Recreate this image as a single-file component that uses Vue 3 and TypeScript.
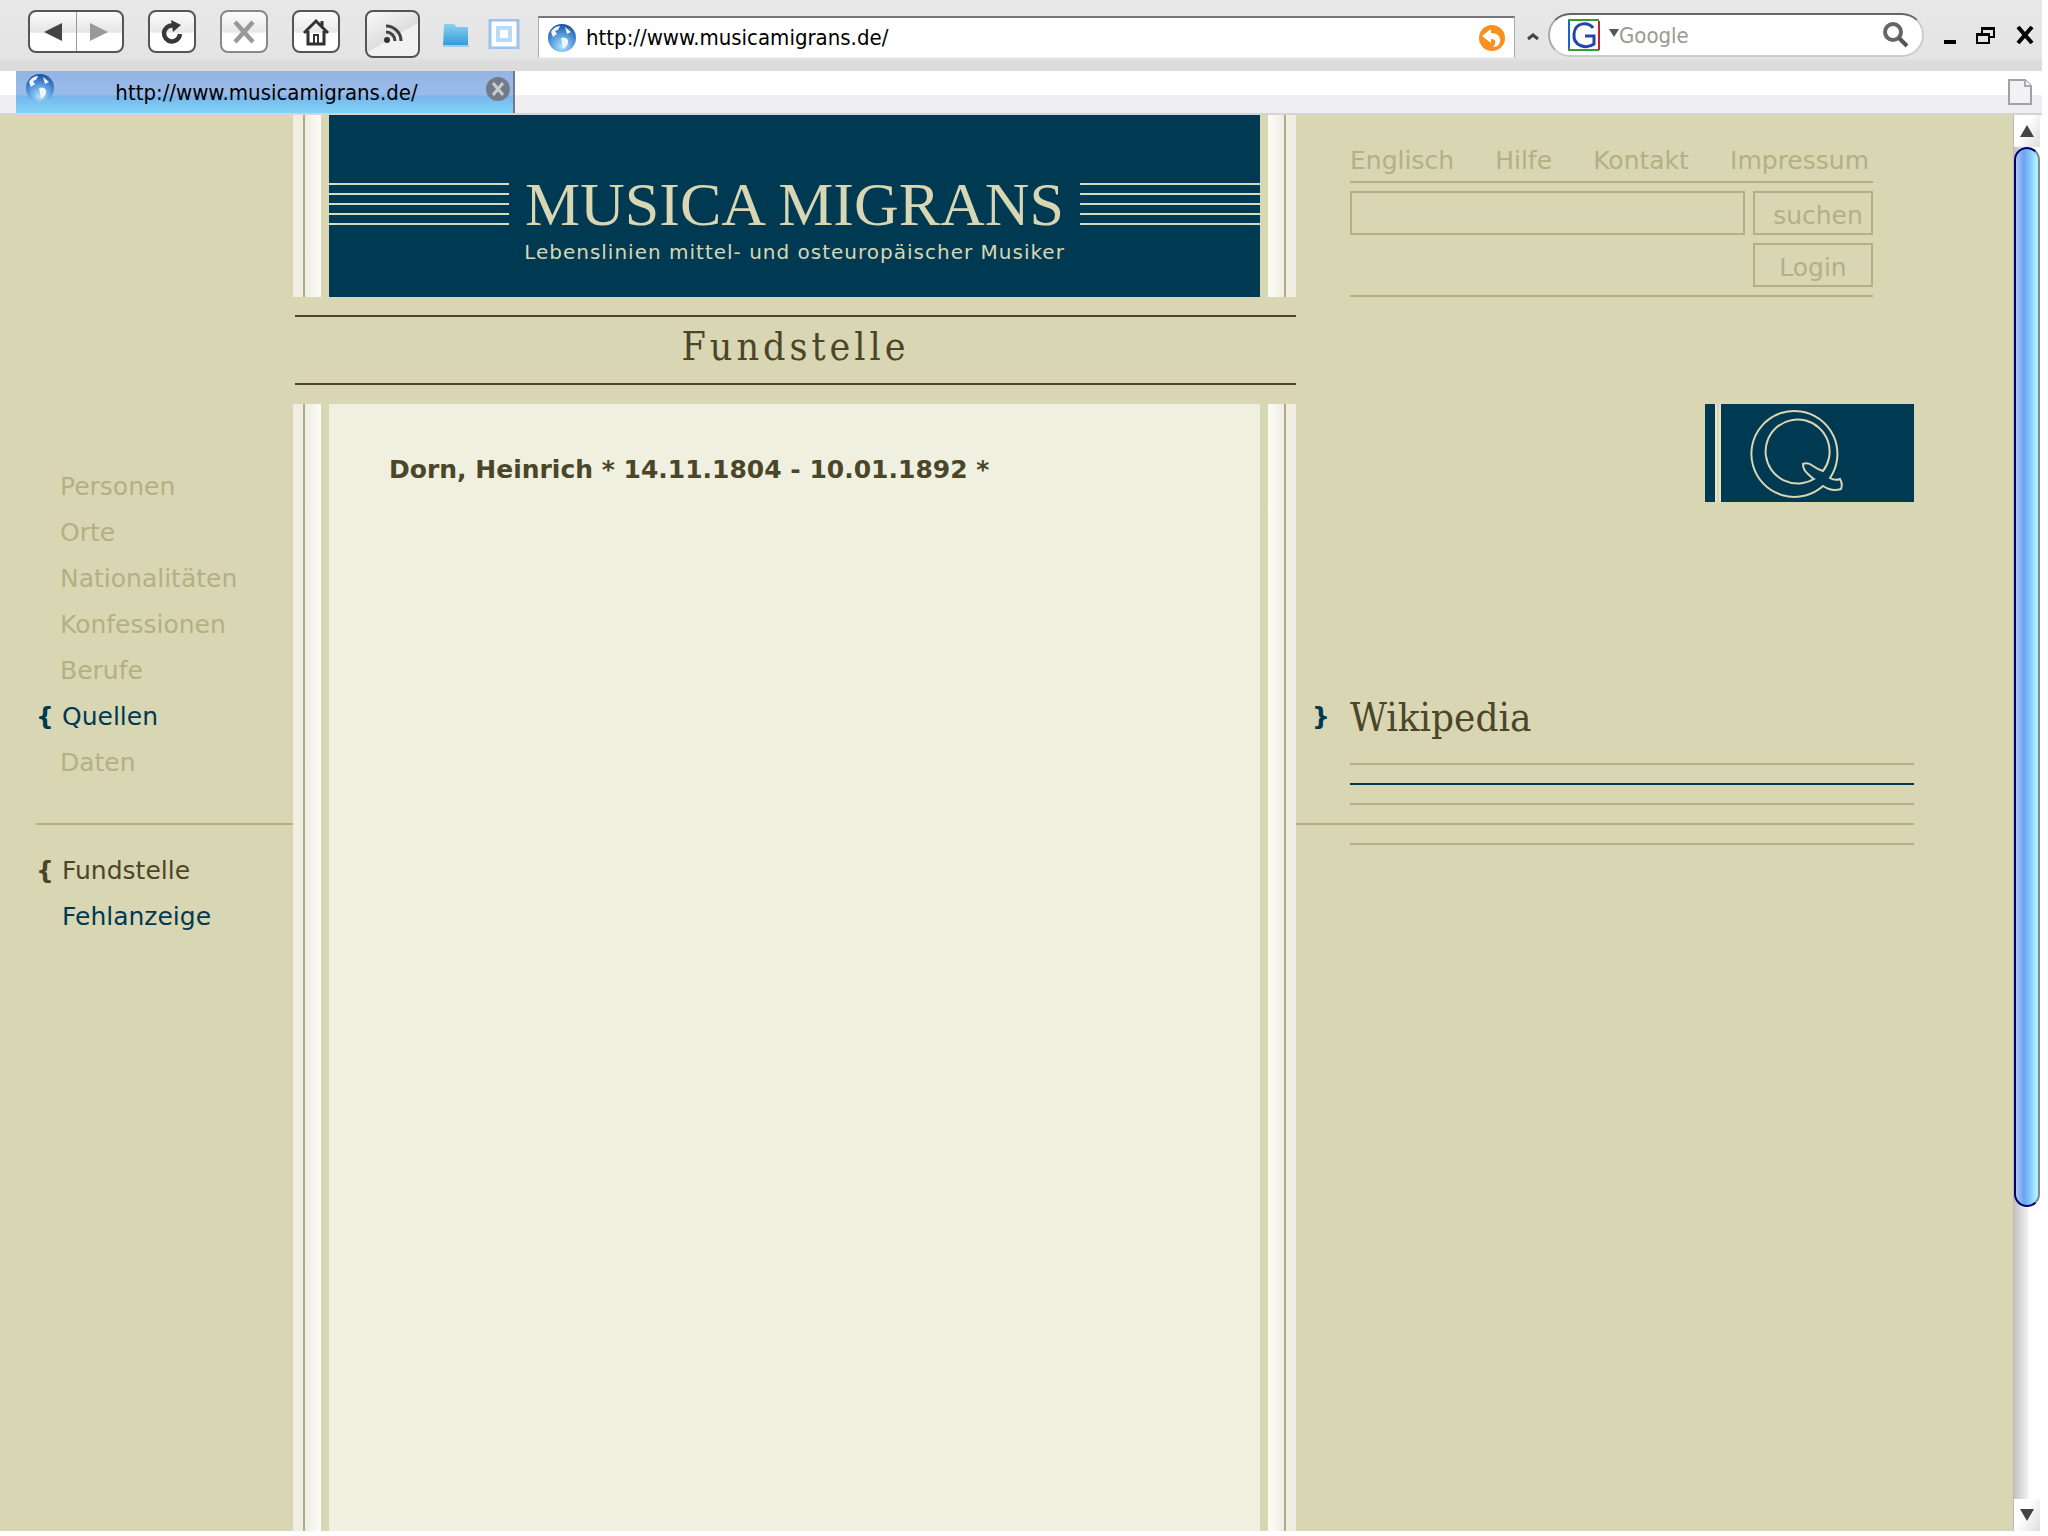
<script setup lang="ts">
interface Entry { label: string; tone: 'dim' | 'blue' | 'dark'; mark?: boolean }

const topLinks: string[] = ['Englisch', 'Hilfe', 'Kontakt', 'Impressum']
const mainNav: Entry[] = [
  { label: 'Personen', tone: 'dim' },
  { label: 'Orte', tone: 'dim' },
  { label: 'Nationalitäten', tone: 'dim' },
  { label: 'Konfessionen', tone: 'dim' },
  { label: 'Berufe', tone: 'dim' },
  { label: 'Quellen', tone: 'blue', mark: true },
  { label: 'Daten', tone: 'dim' },
]
const subNav: Entry[] = [
  { label: 'Fundstelle', tone: 'dark', mark: true },
  { label: 'Fehlanzeige', tone: 'blue' },
]
</script>

<template>
  <div class="browser">
    <header class="toolbar">
      <div class="pair">
        <button class="half" aria-label="Back"><svg width="18" height="20" viewBox="0 0 18 20"><path d="M18 1v18L0 10z" fill="#444" /></svg></button>
        <button class="half" aria-label="Forward"><svg width="18" height="18" viewBox="0 0 18 18"><path d="M0 0v18L18 9z" fill="#999" /></svg></button>
      </div>
      <button class="tool" aria-label="Reload">
        <svg width="24" height="26" viewBox="0 0 24 26"><path d="M13 6.500A8 8 0 1 0 20 15" fill="none" stroke="#383838" stroke-width="4.500" /><path d="M11 1l10 5-8 7z" fill="#383838" /></svg>
      </button>
      <button class="tool pale" aria-label="Stop">
        <svg width="24" height="24" viewBox="0 0 24 24"><path d="M3 2l18 20M21 2L3 22" stroke="#999" stroke-width="4.500" /></svg>
      </button>
      <button class="tool" aria-label="Home">
        <svg width="28" height="28" viewBox="0 0 28 28"><path d="M2 15L14 3l12 12M6 13v13h16V13M20 8V3" fill="none" stroke="#333" stroke-width="3" /><path d="M12 26v-9h4v9" fill="none" stroke="#333" stroke-width="2" /></svg>
      </button>
      <button class="tool feed" aria-label="Feeds">
        <svg width="20" height="20" viewBox="0 0 20 20"><circle cx="4" cy="16" r="3" fill="#333" /><path d="M3 8a9 9 0 0 1 9 9M3 2a15 15 0 0 1 15 15" fill="none" stroke="#444" stroke-width="3" /></svg>
      </button>
      <svg class="folder" width="28" height="26" viewBox="0 0 28 26"><defs><linearGradient id="fold" x2="0" y2="1"><stop offset="0" stop-color="#8fd0f0" /><stop offset="1" stop-color="#2b9bd6" /></linearGradient></defs><path d="M2 2h10l3 3h11v19H1z" fill="url(#fold)" /><path d="M1 24h26" stroke="#a5cbe8" stroke-width="2" /></svg>
      <svg class="square" width="32" height="30" viewBox="0 0 32 30"><rect x="2" y="1" width="28" height="28" fill="#fff" stroke="#9dc3e6" stroke-width="3" /><rect x="10" y="9" width="12" height="12" fill="#fff" stroke="#b5dcf8" stroke-width="4" /></svg>
      <div class="address">
        <svg class="globe" width="30" height="30" viewBox="0 0 30 30"><use href="#globe" /></svg>
        <input type="text" value="http://www.musicamigrans.de/" aria-label="Address" />
        <svg width="28" height="28" viewBox="0 0 28 28"><circle cx="14" cy="14" r="13" fill="#f7901e" /><path d="M4 12l9-7v4c7 0 10 4 9 9-1 4-4 5-7 5 3-3 4-8-2-8v4z" fill="#fff" /></svg>
      </div>
      <svg class="chev" width="12" height="9" viewBox="0 0 12 9"><path d="M1 7l5-4 5 4" fill="none" stroke="#444" stroke-width="3" /></svg>
      <div class="search">
        <svg width="32" height="32" viewBox="0 0 32 32"><path d="M1 31V1" stroke="#1668c8" stroke-width="2" /><path d="M0 1h31M0 31h31" stroke="#3a9a3a" stroke-width="2" /><path d="M31 2v29" stroke="#c8202c" stroke-width="2" /><path d="M25 9C22 3 7 2 6 15s13 15 20 10v-8h-9" fill="none" stroke="#2244b0" stroke-width="3" /></svg>
        <svg class="tri" width="10" height="8" viewBox="0 0 10 8"><path d="M0 0h10L5 8z" fill="#555" /></svg>
        <input type="text" placeholder="Google" aria-label="Search" />
        <svg width="28" height="28" viewBox="0 0 28 28"><circle cx="11" cy="11" r="8" fill="none" stroke="#666" stroke-width="4" /><path d="M17 17l8 8" stroke="#555" stroke-width="4" /></svg>
      </div>
      <div class="win">
        <button aria-label="Minimise"><svg width="12" height="18" viewBox="0 0 12 18"><path d="M0 16h12" stroke="#000" stroke-width="4" /></svg></button>
        <button aria-label="Restore"><svg width="20" height="18" viewBox="0 0 20 18"><path d="M6 7V2h12v9h-4M6 3h12" fill="none" stroke="#000" stroke-width="2" /><path d="M1 8h12v9H1zM1 9h12" fill="none" stroke="#000" stroke-width="2" /></svg></button>
        <button aria-label="Close"><svg width="18" height="18" viewBox="0 0 18 18"><path d="M2 1l14 16M16 1L2 17" stroke="#000" stroke-width="4" /></svg></button>
      </div>
    </header>

    <div class="tabs">
      <div class="tab">
        <svg class="globe" width="30" height="30" viewBox="0 0 30 30">
          <defs>
            <radialGradient id="sea" cx=".5" cy=".8" r=".8"><stop offset="0" stop-color="#b4e2fa" /><stop offset=".5" stop-color="#5a9fe0" /><stop offset="1" stop-color="#1c4f9e" /></radialGradient>
            <g id="globe"><circle cx="15" cy="15" r="14" fill="url(#sea)" /><path d="M4 9c2-4 6-6 9-6l-2 4-3 1 2 3-4 3zM14 15c5-1 8 1 7 5s-3 4-5 6l-1-6zM18 4l6 5-4 2z" fill="#eef7ff" /></g>
          </defs>
          <use href="#globe" />
        </svg>
        <span>http://www.musicamigrans.de/</span>
        <button aria-label="Close tab"><svg width="24" height="24" viewBox="0 0 24 24"><circle cx="12" cy="12" r="12" fill="#747b88" /><path d="M7 6l10 12M17 6L7 18" stroke="#ccc" stroke-width="3" /></svg></button>
      </div>
      <svg width="24" height="26" viewBox="0 0 24 26"><path d="M1 1h16l6 6v18H1z" fill="#f2f2f4" stroke="#a0a0a4" stroke-width="2" /><path d="M17 1v6h6" fill="#fff" stroke="#aaa" stroke-width="2" /></svg>
    </div>

    <div class="view">
      <div class="page">
        <aside class="left">
          <nav class="list">
            <a v-for="e in mainNav" :key="e.label" href="#" :class="e.tone"><b>{{ e.mark ? '{' : '' }}</b>{{ e.label }}</a>
          </nav>
          <hr />
          <nav class="list sub">
            <a v-for="e in subNav" :key="e.label" href="#" :class="e.tone"><b>{{ e.mark ? '{' : '' }}</b>{{ e.label }}</a>
          </nav>
        </aside>

        <main class="center">
          <div class="framed">
            <i class="pillar"></i>
            <div class="banner">
              <div class="brand">
                <div class="staff"><i v-for="n in 5" :key="n"></i></div>
                <h1>MUSICA MIGRANS</h1>
                <div class="staff"><i v-for="n in 5" :key="n"></i></div>
              </div>
              <p>Lebenslinien mittel- und osteuropäischer Musiker</p>
            </div>
            <i class="pillar flip"></i>
          </div>
          <h2>Fundstelle</h2>
          <div class="framed grow">
            <i class="pillar"></i>
            <article>Dorn, Heinrich * 14.11.1804 - 10.01.1892 *</article>
            <i class="pillar flip"></i>
          </div>
        </main>

        <aside class="right">
          <div class="tools">
            <nav><a v-for="l in topLinks" :key="l" href="#">{{ l }}</a></nav>
            <form @submit.prevent>
              <input type="text" aria-label="Suche" />
              <button class="find">suchen</button>
              <button class="login" type="button">Login</button>
            </form>
          </div>
          <svg class="q" width="209" height="98" viewBox="0 0 209 98">
            <path d="M0 0h10v98H0zM16 0h193v98H16z" fill="#003a52" />
            <path d="M11 0v98M15 0v98" stroke="#e8e4c8" stroke-width="2" />
            <g fill="none" stroke="#d9d6b3" stroke-width="2">
              <path d="M118 82A43 43 0 1 1 125 74Q130 77 135 75Q138 80 136 85Q127 88 118 82z" />
              <path d="M109 75A32 32 0 1 1 118 67Q112 65 108 62Q103 58 98 60Q98 66 103 70Q106 73 109 75z" />
            </g>
          </svg>
          <div class="wiki"><b>}</b><a href="#">Wikipedia</a></div>
          <div class="lines"><i></i><i class="blue"></i><i></i><i class="long"></i><i></i></div>
        </aside>
      </div>

      <div class="scroll">
        <button aria-label="Scroll up"><svg width="14" height="12" viewBox="0 0 14 12"><path d="M0 12h14L7 0z" fill="#444" /></svg></button>
        <div class="track"><div class="thumb"></div></div>
        <button aria-label="Scroll down"><svg width="14" height="12" viewBox="0 0 14 12"><path d="M0 0h14L7 12z" fill="#444" /></svg></button>
      </div>
    </div>
  </div>
</template>

<style>
body { background: #fff; }
#app { display: flow-root; }
</style>

<style scoped>
* { box-sizing: border-box; margin: 0; padding: 0; }
button, input { border: 0; background: none; font: inherit; color: inherit; min-width: 0; outline: 0; }
button { display: flex; align-items: center; justify-content: center; }
a { color: inherit; text-decoration: none; }
svg { flex: none; display: block; }
.browser { display: flex; flex-direction: column; min-height: calc(100vh - 5px); margin: 0 6px 5px 0; font-family: "DejaVu Sans", Verdana, sans-serif; }

.toolbar { height: 71px; display: flex; align-items: flex-start; padding: 10px 8px 0 28px; background: linear-gradient(#e8e8e8 0, #e4e4e4 58px, #dcdcdc 62px, #dcdcdc 100%); font-family: "DejaVu Sans Condensed", Tahoma, sans-serif; font-size: 22px; }
.pair { display: flex; width: 96px; height: 43px; border: 2px solid #555; border-radius: 8px; background: linear-gradient(#fcfcfc, #e4e4e4 52%, #fff 54%); }
.half { flex: 1; }
.half + .half { border-left: 1px solid #999; }
.tool { width: 48px; height: 43px; margin-left: 24px; border: 2px solid #555; border-radius: 8px; background: linear-gradient(#fcfcfc, #e8e8e8 52%, #fff 54%); }
.pale { border-color: #888; }
.feed { width: 55px; height: 48px; margin-left: 25px; background: linear-gradient(150deg, #fafafa, #dedede 54%, #f2f2f2 56%); }
.folder { margin: 12px 0 0 22px; }
.square { margin: 9px 0 0 18px; }
.address { flex: 1; height: 42px; margin: 6px 0 0 18px; display: flex; align-items: center; padding: 0 8px; gap: 9px; background: #fff; border: 1px solid #aaa; border-top: 2px solid #777; border-bottom-color: #eee; }
.address input { flex: 1; height: 36px; }
.chev { margin: 22px 0 0 12px; }
.search { width: 376px; height: 44px; margin: 3px 0 0 9px; padding: 0 12px 0 18px; display: flex; align-items: center; background: #fff; border: 2px solid #ccc; border-top-color: #666; border-left-color: #aaa; border-radius: 22px; }
.search input { flex: 1; height: 36px; }
.search input::placeholder { color: #9a9a90; opacity: 1; }
.tri { margin: 0 0 4px 9px; }
.win { display: flex; gap: 20px; margin: 16px 0 0 20px; }

.tabs { height: 44px; display: flex; justify-content: space-between; padding-left: 16px; padding-right: 10px; background: linear-gradient(#fff 24px, #eeeef0 24px); border-bottom: 2px solid #d4d4d0; font-family: "DejaVu Sans Condensed", Tahoma, sans-serif; font-size: 22px; }
.tabs > svg { margin-top: 8px; }
.tab { width: 499px; display: flex; padding: 2px 3px 0 9px; background: linear-gradient(#94b4e4, #98bcea 24px, #78b4ec 25px, #80d4f8); border-right: 2px solid #778; }
.tab span { flex: 1; text-align: center; line-height: 40px; padding-right: 8px; }
.tab button { height: 28px; padding-top: 4px; }

.view { flex: 1; display: flex; background: #d9d6b3; }
.page { flex: 1; display: flex; min-width: 0; font-size: 25px; color: #4c4628; }
.left { width: 293px; padding: 349px 0 0 36px; }
.list { display: flex; flex-direction: column; }
.list a { display: flex; line-height: 46px; }
.list b { width: 26px; }
.dim { color: #b3b083; }
.list .dim { padding-left: 24px; }
.list .dim b { width: 0; }
.blue { color: #003a52; }
.dark { color: #4c4628; }
.left hr { height: 2px; border: 0; background: #b3b083; margin-top: 37px; }
.sub { margin-top: 23px; }

.center { width: 1003px; display: flex; flex-direction: column; }
.framed { display: flex; }
.grow { flex: 1; }
.pillar { width: 36px; background: linear-gradient(90deg, #f0eee2 0 10px, #b0ac80 10px 12px, #eeede4 12px, #fdfdf8 28px, #d9d6b3 28px); }
.flip { transform: scaleX(-1); }
.banner { flex: 1; height: 182px; background: #003a52; color: #d9d6b3; }
.brand { display: flex; align-items: center; justify-content: space-between; margin-top: 53px; height: 72px; }
.staff { width: 180px; height: 42px; display: flex; flex-direction: column; justify-content: space-between; }
.staff i { height: 2px; background: #d4dcc0; }
h1 { font: 400 62px/72px "Liberation Serif", "Times New Roman", serif; }
.banner p { font-size: 20px; line-height: 24px; letter-spacing: 1px; text-align: center; }
h2 { margin: 18px 0 19px 2px; height: 70px; border: solid #4c4628; border-width: 2px 0; text-align: center; font: 400 39px/60px "DejaVu Serif Condensed", "DejaVu Serif", serif; letter-spacing: 4px; }
article { flex: 1; background: #eff0e0; padding: 51px 60px; font-weight: 700; line-height: 30px; }

.right { flex: 1; display: flex; flex-direction: column; padding: 30px 99px 0 54px; min-width: 0; }
.tools { width: 523px; color: #b3b083; border-bottom: 2px solid #b3b083; padding-bottom: 8px; }
.tools nav { display: flex; justify-content: space-between; line-height: 32px; padding: 0 4px 4px 0; border-bottom: 2px solid #b3b083; }
form { display: grid; grid-template-columns: 1fr 120px; gap: 8px; margin-top: 8px; }
form input, form button { height: 44px; border: 2px solid #b3b083; }
.find { padding: 5px 0 0 10px; }
.login { grid-column: 2; padding-top: 5px; }
.q { align-self: flex-end; margin-top: 107px; }
.wiki { display: flex; align-items: center; margin: 190px 0 0 -38px; height: 50px; font: 400 40px/50px "DejaVu Serif Condensed", "DejaVu Serif", serif; }
.wiki b { width: 38px; font: 700 25px/50px "DejaVu Sans", sans-serif; color: #003a52; }
.lines { display: flex; flex-direction: column; gap: 18px; margin-top: 21px; }
.lines i { height: 2px; background: #b3b083; }
.lines .blue { background: #003a52; }
.lines .long { margin-left: -54px; }

.scroll { width: 29px; display: flex; flex-direction: column; background: #fff; border-left: 1px solid #bbb; padding-right: 2px; }
.scroll button { height: 32px; background: linear-gradient(120deg, #fff 40%, #ddd); }
.track { flex: 1; background: linear-gradient(90deg, #c4c2c4, #eee 50%, #fff 60%); }
.thumb { height: 78.4%; border: 2px solid #00006e; border-right-color: #888; border-radius: 14px; background: linear-gradient(90deg, #b0c8f4, #68a4f0 35%, #80c0fc 60%, #a8f0ff 90%); }
</style>
